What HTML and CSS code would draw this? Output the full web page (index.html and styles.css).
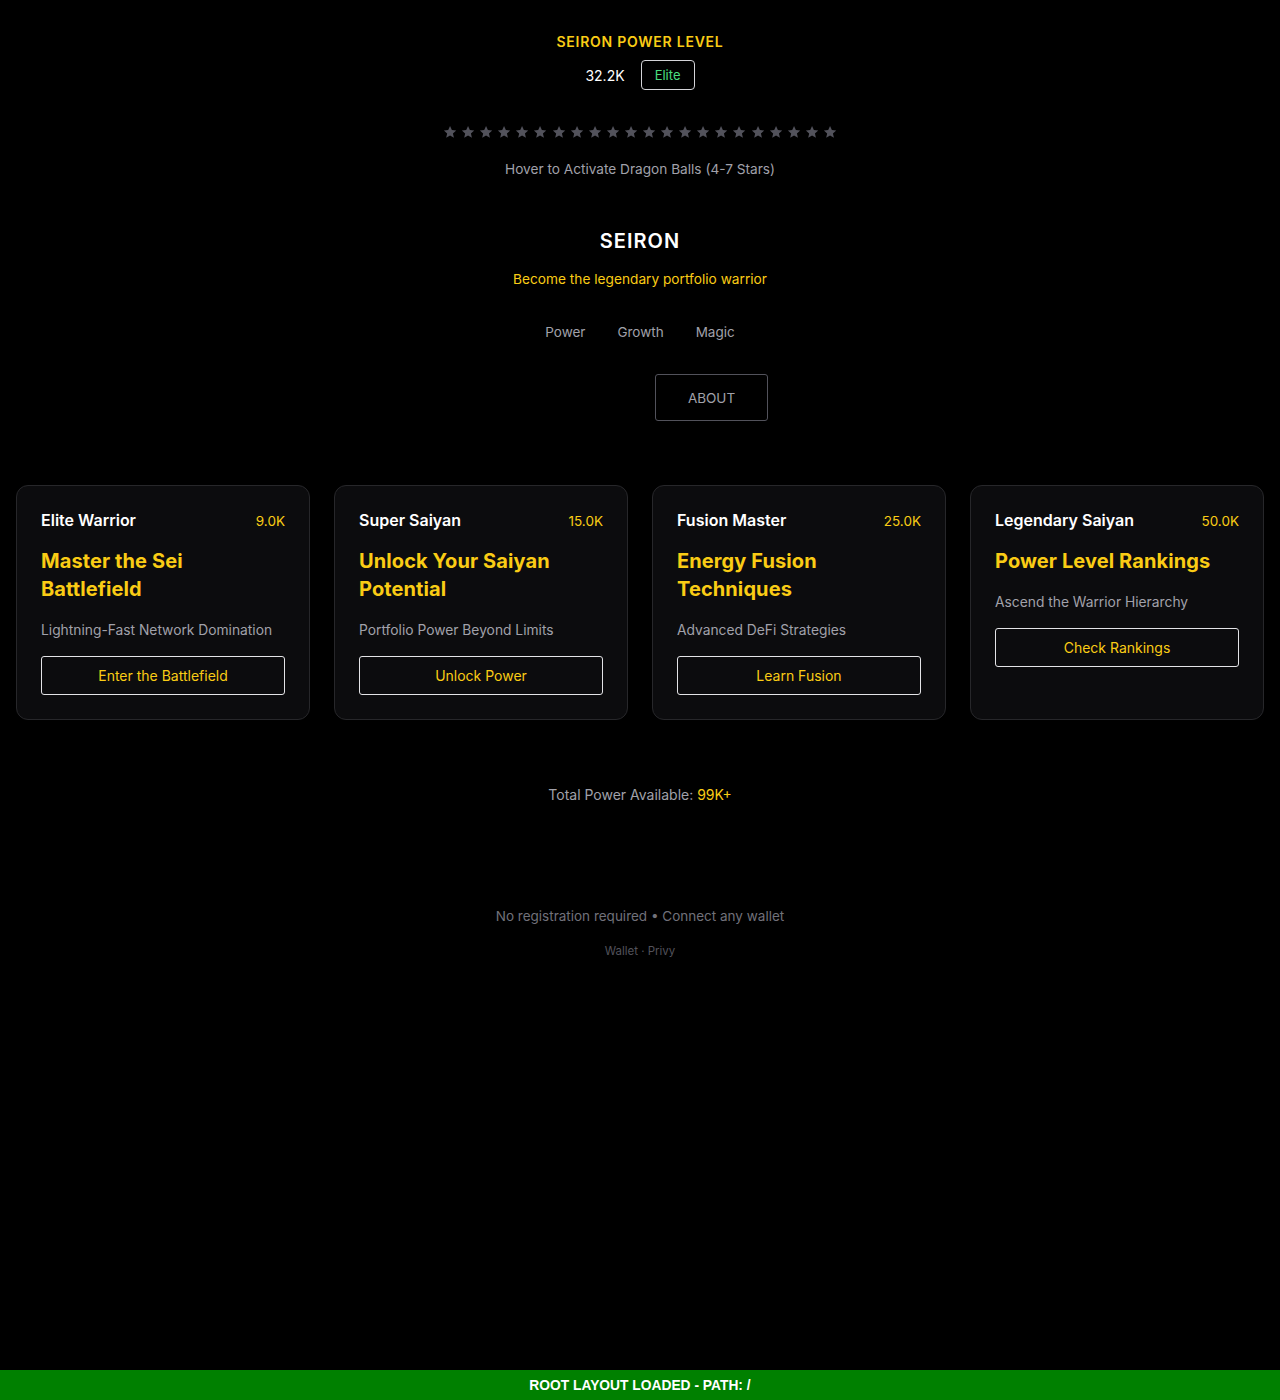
FILE: index.html
```html
<!DOCTYPE html>
<html lang="en">
<head>
<meta charset="utf-8">
<title>Seiron</title>
<link rel="stylesheet" href="styles.css">
</head>
<body>
<main class="page">
  <section class="power">
    <div class="power-label">SEIRON POWER LEVEL</div>
    <div class="power-row">
      <span class="power-value">32.2K</span>
      <span class="badge">Elite</span>
    </div>
    <div class="stars">
      <svg class="star" viewBox="0 0 24 24"><path d="M12 1.8l3.1 6.9 7.4.7-5.6 5 1.7 7.4L12 17.9l-6.6 3.9 1.7-7.4-5.6-5 7.4-.7z"/></svg>
      <svg class="star" viewBox="0 0 24 24"><path d="M12 1.8l3.1 6.9 7.4.7-5.6 5 1.7 7.4L12 17.9l-6.6 3.9 1.7-7.4-5.6-5 7.4-.7z"/></svg>
      <svg class="star" viewBox="0 0 24 24"><path d="M12 1.8l3.1 6.9 7.4.7-5.6 5 1.7 7.4L12 17.9l-6.6 3.9 1.7-7.4-5.6-5 7.4-.7z"/></svg>
      <svg class="star" viewBox="0 0 24 24"><path d="M12 1.8l3.1 6.9 7.4.7-5.6 5 1.7 7.4L12 17.9l-6.6 3.9 1.7-7.4-5.6-5 7.4-.7z"/></svg>
      <svg class="star" viewBox="0 0 24 24"><path d="M12 1.8l3.1 6.9 7.4.7-5.6 5 1.7 7.4L12 17.9l-6.6 3.9 1.7-7.4-5.6-5 7.4-.7z"/></svg>
      <svg class="star" viewBox="0 0 24 24"><path d="M12 1.8l3.1 6.9 7.4.7-5.6 5 1.7 7.4L12 17.9l-6.6 3.9 1.7-7.4-5.6-5 7.4-.7z"/></svg>
      <svg class="star" viewBox="0 0 24 24"><path d="M12 1.8l3.1 6.9 7.4.7-5.6 5 1.7 7.4L12 17.9l-6.6 3.9 1.7-7.4-5.6-5 7.4-.7z"/></svg>
      <svg class="star" viewBox="0 0 24 24"><path d="M12 1.8l3.1 6.9 7.4.7-5.6 5 1.7 7.4L12 17.9l-6.6 3.9 1.7-7.4-5.6-5 7.4-.7z"/></svg>
      <svg class="star" viewBox="0 0 24 24"><path d="M12 1.8l3.1 6.9 7.4.7-5.6 5 1.7 7.4L12 17.9l-6.6 3.9 1.7-7.4-5.6-5 7.4-.7z"/></svg>
      <svg class="star" viewBox="0 0 24 24"><path d="M12 1.8l3.1 6.9 7.4.7-5.6 5 1.7 7.4L12 17.9l-6.6 3.9 1.7-7.4-5.6-5 7.4-.7z"/></svg>
      <svg class="star" viewBox="0 0 24 24"><path d="M12 1.8l3.1 6.9 7.4.7-5.6 5 1.7 7.4L12 17.9l-6.6 3.9 1.7-7.4-5.6-5 7.4-.7z"/></svg>
      <svg class="star" viewBox="0 0 24 24"><path d="M12 1.8l3.1 6.9 7.4.7-5.6 5 1.7 7.4L12 17.9l-6.6 3.9 1.7-7.4-5.6-5 7.4-.7z"/></svg>
      <svg class="star" viewBox="0 0 24 24"><path d="M12 1.8l3.1 6.9 7.4.7-5.6 5 1.7 7.4L12 17.9l-6.6 3.9 1.7-7.4-5.6-5 7.4-.7z"/></svg>
      <svg class="star" viewBox="0 0 24 24"><path d="M12 1.8l3.1 6.9 7.4.7-5.6 5 1.7 7.4L12 17.9l-6.6 3.9 1.7-7.4-5.6-5 7.4-.7z"/></svg>
      <svg class="star" viewBox="0 0 24 24"><path d="M12 1.8l3.1 6.9 7.4.7-5.6 5 1.7 7.4L12 17.9l-6.6 3.9 1.7-7.4-5.6-5 7.4-.7z"/></svg>
      <svg class="star" viewBox="0 0 24 24"><path d="M12 1.8l3.1 6.9 7.4.7-5.6 5 1.7 7.4L12 17.9l-6.6 3.9 1.7-7.4-5.6-5 7.4-.7z"/></svg>
      <svg class="star" viewBox="0 0 24 24"><path d="M12 1.8l3.1 6.9 7.4.7-5.6 5 1.7 7.4L12 17.9l-6.6 3.9 1.7-7.4-5.6-5 7.4-.7z"/></svg>
      <svg class="star" viewBox="0 0 24 24"><path d="M12 1.8l3.1 6.9 7.4.7-5.6 5 1.7 7.4L12 17.9l-6.6 3.9 1.7-7.4-5.6-5 7.4-.7z"/></svg>
      <svg class="star" viewBox="0 0 24 24"><path d="M12 1.8l3.1 6.9 7.4.7-5.6 5 1.7 7.4L12 17.9l-6.6 3.9 1.7-7.4-5.6-5 7.4-.7z"/></svg>
      <svg class="star" viewBox="0 0 24 24"><path d="M12 1.8l3.1 6.9 7.4.7-5.6 5 1.7 7.4L12 17.9l-6.6 3.9 1.7-7.4-5.6-5 7.4-.7z"/></svg>
      <svg class="star" viewBox="0 0 24 24"><path d="M12 1.8l3.1 6.9 7.4.7-5.6 5 1.7 7.4L12 17.9l-6.6 3.9 1.7-7.4-5.6-5 7.4-.7z"/></svg>
      <svg class="star" viewBox="0 0 24 24"><path d="M12 1.8l3.1 6.9 7.4.7-5.6 5 1.7 7.4L12 17.9l-6.6 3.9 1.7-7.4-5.6-5 7.4-.7z"/></svg>
    </div>
    <div class="hint">Hover to Activate Dragon Balls (4-7 Stars)</div>
  </section>

  <section class="hero">
    <h1 class="brand">SEIRON</h1>
    <p class="tagline">Become the legendary portfolio warrior</p>
    <nav class="tabs">
      <span>Power</span><span>Growth</span><span>Magic</span>
    </nav>
    <div class="about-row">
      <span class="spacer"></span>
      <button class="about">ABOUT</button>
    </div>
  </section>

  <section class="cards">
    <article class="card">
      <div class="card-head"><span class="rank">Elite Warrior</span><span class="pl">9.0K</span></div>
      <h2 class="card-title">Master the Sei Battlefield</h2>
      <p class="card-desc">Lightning-Fast Network Domination</p>
      <button class="card-btn">Enter the Battlefield</button>
    </article>
    <article class="card">
      <div class="card-head"><span class="rank">Super Saiyan</span><span class="pl">15.0K</span></div>
      <h2 class="card-title">Unlock Your Saiyan Potential</h2>
      <p class="card-desc">Portfolio Power Beyond Limits</p>
      <button class="card-btn">Unlock Power</button>
    </article>
    <article class="card">
      <div class="card-head"><span class="rank">Fusion Master</span><span class="pl">25.0K</span></div>
      <h2 class="card-title">Energy Fusion Techniques</h2>
      <p class="card-desc">Advanced DeFi Strategies</p>
      <button class="card-btn">Learn Fusion</button>
    </article>
    <article class="card">
      <div class="card-head"><span class="rank">Legendary Saiyan</span><span class="pl">50.0K</span></div>
      <h2 class="card-title">Power Level Rankings</h2>
      <p class="card-desc">Ascend the Warrior Hierarchy</p>
      <button class="card-btn">Check Rankings</button>
    </article>
  </section>

  <p class="total">Total Power Available: <span class="gold">99K+</span></p>

  <footer class="foot">
    <p class="noreg">No registration required • Connect any wallet</p>
    <p class="providers">Wallet · Privy</p>
  </footer>
</main>
<div class="banner">ROOT LAYOUT LOADED - PATH: /</div>
</body>
</html>
```
FILE: styles.css
```css
* { box-sizing: border-box; }
html, body { margin: 0; padding: 0; }
body {
  background: #000;
  color: #fff;
  font-family: Inter, "Noto Sans", sans-serif;
  min-height: 1400px;
}
.page { padding: 33px 16px 0; display: flex; flex-direction: column; align-items: center; }
.power { display: flex; flex-direction: column; align-items: center; }
.power-label {
  color: #facc15; font-size: 14px; font-weight: 600; letter-spacing: 0.75px; line-height: 18px;
}
.power-row { display: flex; align-items: center; gap: 16px; margin-top: 9px; }
.power-value { font-size: 14px; color: #fff; }
.badge {
  font-size: 13px; color: #4ade80; border: 1px solid #d4d4d8; border-radius: 4px;
  height: 30px; width: 54px; display: flex; align-items: center; justify-content: center;
}
.stars { display: flex; gap: 4px; margin-top: 32px; height: 20px; align-items: center; }
.star { width: 14.1px; height: 14.1px; fill: #52525b; display: block; }
.hint { margin-top: 17px; font-size: 13.65px; color: #a1a1aa; line-height: 20px; }

.hero { display: flex; flex-direction: column; align-items: center; margin-top: 50px; }
.brand { margin: 0; font-size: 20px; font-weight: 600; letter-spacing: 1px; line-height: 24px; }
.tagline { margin: 16px 0 0; color: #facc15; font-size: 13.7px; line-height: 20px; }
.tabs { display: flex; gap: 32px; margin-top: 33px; color: #a1a1aa; font-size: 13.5px; line-height: 20px; }
.about-row { display: flex; gap: 16px; margin-top: 32px; }
.spacer { width: 127px; }
.about {
  width: 113px; height: 47px; background: transparent; color: #a1a1aa;
  border: 1px solid #52525b; border-radius: 3px; font-family: inherit; font-size: 13.5px;
}

.cards {
  align-self: stretch;
  display: grid; grid-template-columns: repeat(4, 1fr); gap: 24px; margin-top: 64px;
}
.card {
  background: #0c0c0e; border: 1px solid #27272a; border-radius: 12px;
  padding: 23px 24px 24px; display: flex; flex-direction: column;
}
.card-head { display: flex; justify-content: space-between; align-items: baseline; line-height: 22px; }
.rank { font-size: 16px; font-weight: 600; color: #fff; }
.pl { font-size: 13.5px; color: #facc15; }
.card-title { margin: 15px 0 0; color: #facc15; font-size: 20px; letter-spacing: 0.1px; font-weight: 700; line-height: 28px; }
.card-desc { margin: 17px 0 0; color: #a1a1aa; font-size: 13.8px; line-height: 20px; }
.card-btn {
  margin-top: 16px; height: 39px; background: transparent; border: 1px solid #e4e4e7;
  border-radius: 3px; color: #facc15; font-family: inherit; font-size: 14px;
}

.total { margin: 65px 0 0; color: #a1a1aa; font-size: 14px; line-height: 20px; }
.gold { color: #facc15; }
.foot { margin-top: 101px; display: flex; flex-direction: column; align-items: center; }
.noreg { margin: 0; color: #71717a; font-size: 13.5px; line-height: 20px; }
.providers { margin: 17px 0 0; color: #52525b; font-size: 11.5px; line-height: 16px; }

.banner {
  position: fixed; left: 0; right: 0; bottom: 0; height: 30px;
  background: #008000; color: #fff; display: flex; align-items: center; justify-content: center;
  font-family: "Liberation Sans", Arial, sans-serif; font-weight: 700; font-size: 13.8px;
}
```
